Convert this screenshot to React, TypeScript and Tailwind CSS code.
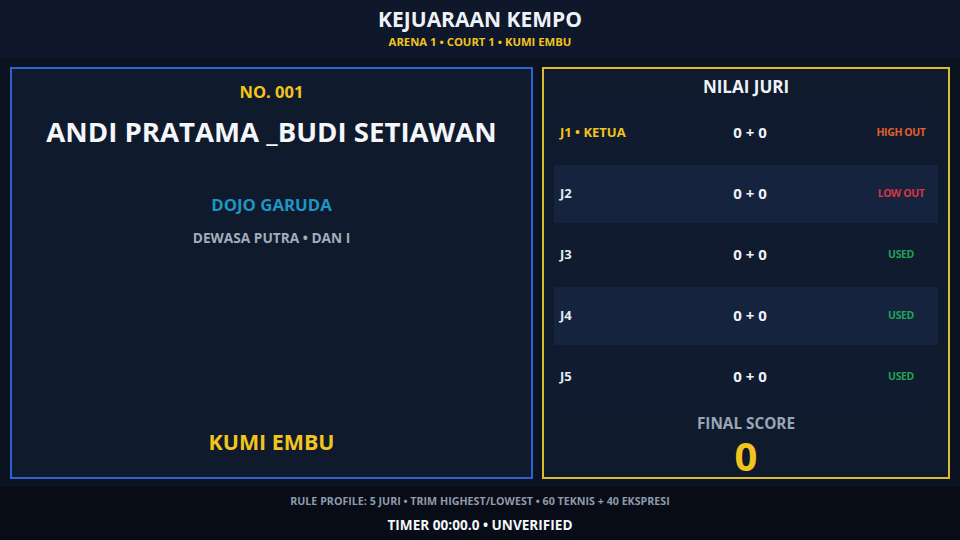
import React from "react";

const rows = [
  { label: "J1 • KETUA", labelCls: "text-[#f2c41d]", status: "HIGH OUT", statusCls: "text-[#e2612c]", bg: "bg-[#101b2f]" },
  { label: "J2", labelCls: "text-[#e6ebf2]", status: "LOW OUT", statusCls: "text-[#d8353f]", bg: "bg-[#15233f]" },
  { label: "J3", labelCls: "text-[#e6ebf2]", status: "USED", statusCls: "text-[#1fa357]", bg: "bg-[#101b2f]" },
  { label: "J4", labelCls: "text-[#e6ebf2]", status: "USED", statusCls: "text-[#1fa357]", bg: "bg-[#15233f]" },
  { label: "J5", labelCls: "text-[#e6ebf2]", status: "USED", statusCls: "text-[#1fa357]", bg: "bg-[#101b2f]" },
];

export default function App() {
  return (
    <div
      className="w-[960px] h-[540px] flex flex-col bg-[#0b1220] overflow-hidden"
      style={{ fontFamily: '"Open Sans", "Noto Sans", sans-serif' }}
    >
      <header className="h-[58px] shrink-0 bg-[#0f172a] flex flex-col items-center pt-[5px]">
        <div className="text-[21px] leading-[28px] font-bold text-[#eef2f7]">KEJUARAAN KEMPO</div>
        <div className="text-[11.3px] leading-[16px] font-bold text-[#f2c41d] mt-[1px]">ARENA 1 • COURT 1 • KUMI EMBU</div>
      </header>

      <main className="flex-1 flex gap-[9px] px-[10px] pt-[9px] pb-[8px]">
        <section className="w-[523px] border-2 border-[#2f63cf] bg-[#0f1a2d] flex flex-col items-center pt-[13px] pb-[21px]">
          <div className="text-[16.5px] leading-[20px] font-bold text-[#f2c41d]">NO. 001</div>
          <div className="mt-[12px] text-[27.6px] leading-[34px] font-bold text-[#f4f6fa]">ANDI PRATAMA _BUDI SETIAWAN</div>
          <div className="mt-[46px] text-[16.8px] leading-[22px] font-bold text-[#1f95c4]">DOJO GARUDA</div>
          <div className="mt-[13px] text-[13.7px] leading-[18px] font-bold text-[#a3adbb]">DEWASA PUTRA • DAN I</div>
          <div className="mt-auto text-[21.4px] leading-[28px] font-bold text-[#f2c41d]">KUMI EMBU</div>
        </section>

        <section className="flex-1 border-2 border-[#d9bd2e] bg-[#0f1a2d] flex flex-col px-[10px] pt-[7px]">
          <div className="text-center text-[17px] leading-[22px] font-bold text-[#eef2f7]">NILAI JURI</div>
          <div className="mt-[6px] flex flex-col gap-[3px]">
            {rows.map((r) => (
              <div key={r.label} className={`h-[58px] flex items-center pb-[1px] ${r.bg}`}>
                <div className={`w-[80px] pl-[6px] text-[13px] font-bold ${r.labelCls}`}>{r.label}</div>
                <div className="flex-1 text-center text-[15px] font-bold text-[#eef2f7]">0 + 0</div>
                <div className={`w-[70px] mr-[2px] text-center text-[10.5px] tracking-[-0.4px] font-bold ${r.statusCls}`}>{r.status}</div>
              </div>
            ))}
          </div>
          <div className="mt-[7px] flex flex-col items-center">
            <div className="text-[15.3px] leading-[20px] font-bold text-[#9aa6b6]">FINAL SCORE</div>
            <div className="mt-[3px] text-[40px] leading-[40px] font-bold text-[#f2c41d]">0</div>
          </div>
        </section>
      </main>

      <footer className="h-[53px] shrink-0 bg-[#070c16] flex flex-col items-center pt-[6px]">
        <div className="text-[10.7px] leading-[16px] font-bold text-[#8f9aab]">RULE PROFILE: 5 JURI • TRIM HIGHEST/LOWEST • 60 TEKNIS + 40 EKSPRESI</div>
        <div className="mt-[7px] text-[13.6px] leading-[18px] font-bold text-[#f4f6fa]">TIMER 00:00.0 • UNVERIFIED</div>
      </footer>
    </div>
  );
}
